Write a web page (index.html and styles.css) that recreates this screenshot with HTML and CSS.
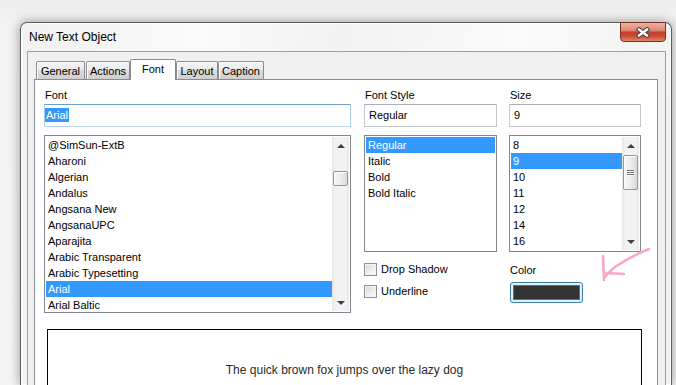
FILE: index.html
```html
<!DOCTYPE html>
<html lang="en">
<head>
    <meta charset="UTF-8">
    <title>New Text Object</title>
    <link rel="stylesheet" href="styles.css">
</head>
<body>

    <div class="window">
        <div class="titlebar">
            <span class="title">New Text Object</span>
            <div class="close">
                <svg width="14" height="11" viewBox="0 0 14 11">
                    <path d="M3 2.5 L11 8.5 M11 2.5 L3 8.5" stroke="#3c3c3c" stroke-width="4.4" stroke-linecap="square" fill="none"/>
                    <path d="M3 2.5 L11 8.5 M11 2.5 L3 8.5" stroke="#ffffff" stroke-width="2.4" stroke-linecap="square" fill="none"/>
                </svg>
            </div>
        </div>

        <div class="client">
            <!-- Tab strip -->
            <div class="tabs">
                <div class="tab tab-general">General</div>
                <div class="tab tab-actions">Actions</div>
                <div class="tab tab-font active">Font</div>
                <div class="tab tab-layout">Layout</div>
                <div class="tab tab-caption">Caption</div>
            </div>

            <div class="panel">
                <div class="fields">

                    <!-- Font column -->
                    <div class="col col-font">
                        <div class="label">Font</div>
                        <div class="textbox focused"><span class="sel">Arial</span></div>
                        <div class="listbox list-font">
                            <ul class="items">
                                <li>@SimSun-ExtB</li>
                                <li>Aharoni</li>
                                <li>Algerian</li>
                                <li>Andalus</li>
                                <li>Angsana New</li>
                                <li>AngsanaUPC</li>
                                <li>Aparajita</li>
                                <li>Arabic Transparent</li>
                                <li>Arabic Typesetting</li>
                                <li class="selected">Arial</li>
                                <li>Arial Baltic</li>
                            </ul>
                            <div class="scrollbar">
                                <div class="arrow up"></div>
                                <div class="track">
                                    <div class="thumb thumb-small"></div>
                                </div>
                                <div class="arrow down"></div>
                            </div>
                        </div>
                    </div>

                    <!-- Font style column -->
                    <div class="col col-style">
                        <div class="label">Font Style</div>
                        <div class="textbox">Regular</div>
                        <div class="listbox list-short">
                            <ul class="items">
                                <li class="selected">Regular</li>
                                <li>Italic</li>
                                <li>Bold</li>
                                <li>Bold Italic</li>
                            </ul>
                        </div>
                        <div class="check first"><span class="box"></span>Drop Shadow</div>
                        <div class="check"><span class="box"></span>Underline</div>
                    </div>

                    <!-- Size column -->
                    <div class="col col-size">
                        <div class="label">Size</div>
                        <div class="textbox">9</div>
                        <div class="listbox list-short">
                            <ul class="items">
                                <li>8</li>
                                <li class="selected">9</li>
                                <li>10</li>
                                <li>11</li>
                                <li>12</li>
                                <li>14</li>
                                <li>16</li>
                            </ul>
                            <div class="scrollbar">
                                <div class="arrow up"></div>
                                <div class="track">
                                    <div class="thumb thumb-big">
                                        <span></span><span></span><span></span>
                                    </div>
                                </div>
                                <div class="arrow down"></div>
                            </div>
                        </div>
                        <div class="label color-label">Color</div>
                        <div class="color-button"><span class="swatch"></span></div>
                    </div>

                </div>

                <div class="preview">The quick brown fox jumps over the lazy dog</div>
            </div>
        </div>
    </div>

    <!-- hand drawn pink arrow pointing at the color button -->
    <svg class="annotation" width="676" height="385" viewBox="0 0 676 385">
        <path d="M649 249 C 636 254, 624 261, 615 267 C 610 271, 607 274, 604 278" stroke="#f7a8c9" stroke-width="2.6" fill="none" stroke-linecap="round"/>
        <path d="M603 256 L604 280" stroke="#f7a8c9" stroke-width="2.6" fill="none" stroke-linecap="round"/>
        <path d="M606 273 L624 274" stroke="#f7a8c9" stroke-width="2.6" fill="none" stroke-linecap="round"/>
    </svg>

</body>
</html>
```

FILE: styles.css
```css
* {
    box-sizing: border-box;
}
body {
    margin: 0;
    padding: 22px 0 0 20px;
    width: 676px;
    height: 385px;
    overflow: hidden;
    position: relative;
    background: linear-gradient(#eeeeee, #f3f3f3 30px, #f4f4f4);
    font-family: "Liberation Sans", Arial, sans-serif;
    font-size: 11px;
    color: #000;
}

/* Window frame */
.window {
    width: 652px;
    height: 363px;
    display: flex;
    flex-direction: column;
    border: 1px solid #5c5c5c;
    border-bottom: none;
    border-radius: 7px 7px 0 0;
    background: linear-gradient(100deg, #f1f1f1, #fafafa 25%, #f2f2f2 45%, #fafafa 70%, #f0f0f0);
    box-shadow: 0 0 11px rgba(0, 0, 0, 0.4), inset 0 0 0 1px rgba(255, 255, 255, 0.9);
}
.titlebar {
    height: 28px;
    flex: none;
    display: flex;
    justify-content: space-between;
    align-items: flex-start;
    padding: 0 5px 0 8px;
}
.title {
    font-size: 12px;
    line-height: 14px;
    margin-top: 7px;
}
.close {
    width: 46px;
    height: 20px;
    margin-top: -1px;
    border: 1px solid #7a3224;
    border-radius: 0 0 4px 4px;
    background: linear-gradient(#eab0a2, #df8b76 40%, #c5402a 52%, #c84a31 72%, #e0866d);
    display: flex;
    align-items: center;
    justify-content: center;
}

/* Client area */
.client {
    flex: 1;
    min-height: 0;
    display: flex;
    flex-direction: column;
    margin: 0 5px 0 6px;
    border: 1px solid #a0a0a0;
    border-bottom: none;
    background: #f0f0f0;
    padding: 7px 7px 0 6px;
}

/* Tabs */
.tabs {
    display: flex;
    flex: none;
    align-items: flex-end;
    height: 20px;
    margin-left: 2px;
}
.tab {
    height: 18px;
    border: 1px solid #898c95;
    border-bottom: none;
    border-radius: 2px 2px 0 0;
    background: linear-gradient(#f4f4f4, #ebebeb 45%, #dcdcdc 50%, #cfcfcf);
    box-shadow: inset 1px 1px 0 #fff;
    text-align: center;
    line-height: 16px;
    padding-top: 1px;
}
.tab-general { width: 49px; margin-right: 1px; }
.tab-actions { width: 44px; }
.tab-font { width: 46px; }
.tab-layout { width: 42px; }
.tab-caption { width: 46px; }
.tab.active {
    height: 21px;
    margin-bottom: -1px;
    position: relative;
    z-index: 1;
    background: #fff;
    box-shadow: none;
    padding-top: 1px;
}

.panel {
    flex: 1;
    min-height: 0;
    overflow: hidden;
    border: 1px solid #898c95;
    border-bottom: none;
    background: #fff;
    padding: 7px 0 0 9px;
}

/* Fields */
.fields {
    display: flex;
    align-items: flex-start;
}
.col-font { width: 307px; margin-right: 13px; }
.col-style { width: 133px; margin-right: 12px; }
.col-size { width: 132px; }

.label {
    height: 17px;
    line-height: 16px;
    padding-left: 1px;
}
.textbox {
    height: 23px;
    border: 1px solid #c5c8cf;
    border-top-color: #abadb3;
    padding-left: 4px;
    line-height: 20px;
    white-space: nowrap;
}
.textbox.focused {
    border-color: #6f9dca #a9cce8 #b9d8ee #a9cce8;
    padding-left: 0;
}
.sel {
    background: #3399ff;
    color: #fff;
    padding: 1px;
}

/* List boxes */
.listbox {
    margin-top: 8px;
    border: 1px solid #828790;
    padding: 1px;
    display: flex;
    overflow: hidden;
}
.list-font { height: 178px; }
.list-short { height: 117px; }
.items {
    list-style: none;
    margin: 0;
    padding: 0;
    flex: 1;
    overflow: hidden;
}
.items li {
    height: 16px;
    line-height: 16px;
    padding-left: 2px;
    white-space: nowrap;
}
.items li.selected {
    background: #3399ff;
    color: #fff;
}

.scrollbar {
    width: 17px;
    display: flex;
    flex-direction: column;
    background: linear-gradient(to right, #e6e6e6, #f2f2f2 20%, #f2f2f2 80%, #e9e9e9);
}
.arrow {
    height: 17px;
    flex: none;
    display: flex;
    align-items: center;
    justify-content: center;
}
.arrow::after {
    content: "";
    border-left: 4px solid transparent;
    border-right: 4px solid transparent;
}
.arrow.up::after { border-bottom: 4px solid #404040; }
.arrow.down::after { border-top: 4px solid #404040; }
.track {
    flex: 1;
}
.thumb {
    margin: 0 1px;
    border: 1px solid #979797;
    border-radius: 2px;
    background: linear-gradient(to right, #f6f6f6, #ececec 50%, #d9d9d9);
    box-shadow: inset 1px 1px 0 #fff;
}
.thumb-small {
    height: 15px;
    margin-top: 17px;
}
.thumb-big {
    height: 35px;
    margin-top: 1px;
    display: flex;
    flex-direction: column;
    align-items: center;
    justify-content: center;
    gap: 1px;
}
.thumb-big span {
    width: 7px;
    height: 1px;
    background: #6f6f6f;
    box-shadow: 0 1px 0 #fff;
}

/* Check boxes */
.check {
    display: flex;
    align-items: center;
    height: 16px;
    line-height: 16px;
    margin-top: 6px;
}
.check.first {
    margin-top: 9px;
}
.box {
    width: 13px;
    height: 13px;
    margin-right: 4px;
    border: 1px solid #8e8f8f;
    background: linear-gradient(135deg, #d6d6d6, #f4f4f4 70%, #fbfbfb);
    box-shadow: inset 0 0 0 1px #f4f4f4;
}

/* Color */
.color-label {
    margin-top: 10px;
    height: 16px;
}
.color-button {
    margin: 4px 0 0 1px;
    width: 73px;
    height: 21px;
    border: 1px solid #3c7fb1;
    border-radius: 3px;
    background: #dff0fb;
    padding: 2px;
}
.swatch {
    display: block;
    height: 100%;
    border: 1px solid #6d6d6d;
    background: #333333;
}

/* Preview */
.preview {
    margin: 16px 0 0 3px;
    width: 595px;
    height: 81px;
    border: 1px solid #000;
    display: flex;
    align-items: center;
    justify-content: center;
    font-size: 12px;
    color: #2a2a2a;
}

.annotation {
    position: absolute;
    left: 0;
    top: 0;
    pointer-events: none;
}
```
